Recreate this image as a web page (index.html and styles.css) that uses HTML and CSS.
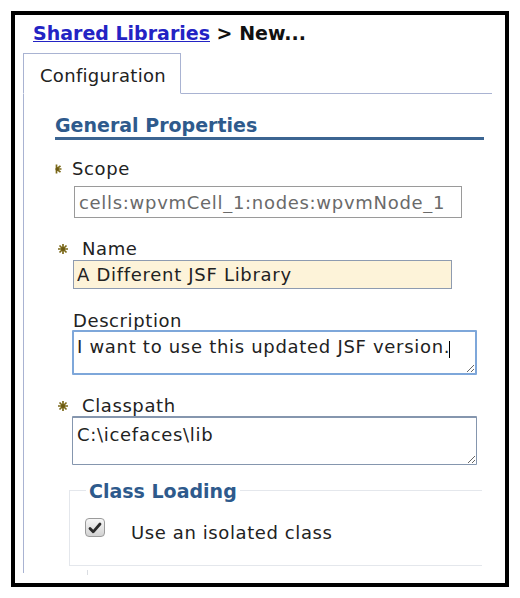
FILE: index.html
```html
<!DOCTYPE html>
<html lang="en">
<head>
    <meta charset="UTF-8">
    <title>Shared Libraries - New</title>
    <link rel="stylesheet" href="styles.css">
</head>
<body>
<div class="frame">
    <h1 class="crumbs"><a href="#">Shared Libraries</a> &gt; New...</h1>

    <div class="tabs">
        <div class="tab">Configuration</div>
    </div>

    <div class="panel">
        <h2 class="section">General Properties</h2>

        <div class="field">
            <div class="label label-scope">
                <svg class="star" width="7" height="10" viewBox="0 0 7 10">
                    <path d="M1.5 0.5v9M1.5 5h5M1.5 5l4-3.2M1.5 5l4 3.2" stroke="#7c6a1b" stroke-width="1.7"/>
                    <circle cx="2" cy="5" r="1.6" fill="#6b5a12"/>
                </svg>
                Scope
            </div>
            <input class="text text-readonly" type="text" value="cells:wpvmCell_1:nodes:wpvmNode_1" readonly>
        </div>

        <div class="field">
            <div class="label label-req label-name">
                <svg class="star" width="10" height="10" viewBox="0 0 10 10">
                    <path d="M5 0v10M0 5h10M1.5 1.5l7 7M8.5 1.5l-7 7" stroke="#7c6a1b" stroke-width="1.7"/>
                    <circle cx="5" cy="5" r="1.8" fill="#6b5a12"/>
                </svg>
                Name
            </div>
            <input class="text text-name" type="text" value="A Different JSF Library">
        </div>

        <div class="field">
            <div class="label label-desc">Description</div>
            <div class="area-wrap">
                <textarea class="area area-focus">I want to use this updated JSF version.</textarea>
                <span class="caret"></span>
            </div>
        </div>

        <div class="field">
            <div class="label label-req label-path">
                <svg class="star" width="10" height="10" viewBox="0 0 10 10">
                    <path d="M5 0v10M0 5h10M1.5 1.5l7 7M8.5 1.5l-7 7" stroke="#7c6a1b" stroke-width="1.7"/>
                    <circle cx="5" cy="5" r="1.8" fill="#6b5a12"/>
                </svg>
                Classpath
            </div>
            <textarea class="area area-tall">C:\icefaces\lib</textarea>
        </div>

        <fieldset class="group">
            <legend>Class Loading</legend>
            <label class="check">
                <span class="box">
                    <svg width="14" height="12" viewBox="0 0 14 12">
                        <path d="M2 6.5l3.2 3.3L12 2" fill="none" stroke="#2b2b2b" stroke-width="2.8" stroke-linecap="round" stroke-linejoin="round"/>
                    </svg>
                </span>
                <span class="check-text">Use an isolated class</span>
            </label>
        </fieldset>
        <span class="tick"></span>
    </div>
</div>
</body>
</html>
```

FILE: styles.css
```css
body {
    margin: 0;
    background: #fff;
    font-family: "DejaVu Sans", Verdana, sans-serif;
    color: #222;
}

.frame {
    box-sizing: border-box;
    width: 498px;
    height: 576px;
    margin: 11px;
    border: 4px solid #000;
    padding: 6px 0 0 18px;
    overflow: hidden;
}

.crumbs {
    margin: 0;
    font-size: 19px;
    line-height: 24px;
    font-weight: bold;
    color: #111;
}
.crumbs a {
    color: #2323c4;
}

.tabs {
    display: flex;
    width: 469px;
    margin: 8px 0 0 -10px;
    border-bottom: 1px solid #a9b3d2;
}
.tab {
    box-sizing: border-box;
    width: 158px;
    height: 41px;
    margin-bottom: -1px;
    padding: 10px 0 0 16px;
    border: 1px solid #a9b3d2;
    border-bottom: 1px solid #fff;
    background: #fff;
    font-size: 18px;
    line-height: 24px;
    letter-spacing: 0.3px;
    color: #222;
}

.panel {
    box-sizing: border-box;
    height: 479px;
    margin-left: -10px;
    padding-left: 31px;
    border-left: 1px solid #a9b3d2;
}

.section {
    width: 429px;
    margin: 0;
    padding-top: 20px;
    border-bottom: 3px solid #3c6592;
    font-size: 19px;
    line-height: 23px;
    font-weight: bold;
    color: #2e5a8c;
}

.field {
    padding-left: 17px;
}
.label {
    display: flex;
    align-items: center;
    font-size: 18px;
    line-height: 22px;
    letter-spacing: 0.6px;
    color: #222;
}
.star {
    flex: none;
}
.label-scope {
    margin: 18px 0 6px -17px;
    gap: 10px;
}
.label-req {
    margin-left: -14px;
    gap: 14px;
}
.label-name {
    margin-top: 20px;
}
.label-desc {
    margin: 21px 0 -2px 1px;
}
.label-path {
    margin-top: 20px;
    margin-bottom: -1px;
}

.text {
    box-sizing: border-box;
    display: block;
    margin: 0;
    padding: 0 4px;
    font-family: "DejaVu Sans", Verdana, sans-serif;
    font-size: 18px;
    letter-spacing: 0.7px;
    outline: none;
}
.text-readonly {
    width: 388px;
    height: 32px;
    margin-left: 2px;
    border: 1px solid #9a9a9a;
    color: #6a6a6a;
    background: #fff;
}
.text-name {
    width: 379px;
    height: 29px;
    margin-left: 1px;
    padding-left: 3px;
    border: 1px solid #8e9bb0;
    background: #fdf3d9;
    color: #222;
}

.area-wrap {
    position: relative;
    width: 405px;
}
.area {
    box-sizing: border-box;
    display: block;
    width: 405px;
    height: 45px;
    margin: 0;
    padding: 6px 4px 0;
    border: 1px solid #8596ae;
    border-top-width: 2px;
    border-radius: 1px;
    font-family: "DejaVu Sans", Verdana, sans-serif;
    font-size: 18px;
    line-height: 22px;
    letter-spacing: 0.7px;
    color: #222;
    outline: none;
    resize: both;
}
.area-focus {
    border: 2px solid #7ea7da;
    padding: 4px 3px 0;
}
.caret {
    position: absolute;
    left: 377px;
    top: 11px;
    width: 1px;
    height: 17px;
    background: #000;
}
.area-tall {
    height: 49px;
}

.group {
    box-sizing: border-box;
    width: 413px;
    height: 88px;
    margin: 13px 0 0 14px;
    padding: 4px 0 0 15px;
    border: 1px solid #e4e7ec;
    border-right: none;
}
.group legend {
    padding: 2px 3px 0;
    margin-left: 1px;
    font-size: 19px;
    line-height: 22px;
    font-weight: bold;
    color: #2e5a8c;
}
.check {
    display: flex;
    align-items: flex-start;
    gap: 26px;
    margin-top: 12px;
    font-size: 18px;
    line-height: 22px;
    letter-spacing: 0.6px;
    color: #222;
}
.check-text {
    padding-top: 4px;
}
.box {
    box-sizing: border-box;
    display: flex;
    align-items: center;
    justify-content: center;
    width: 20px;
    height: 19px;
    border: 1px solid #9b9b9b;
    border-radius: 4px;
    background: linear-gradient(#f7f7f7, #d2d2d2);
}

.tick {
    display: block;
    width: 1px;
    height: 5px;
    margin: 4px 0 0 32px;
    background: #dadde2;
}
```
